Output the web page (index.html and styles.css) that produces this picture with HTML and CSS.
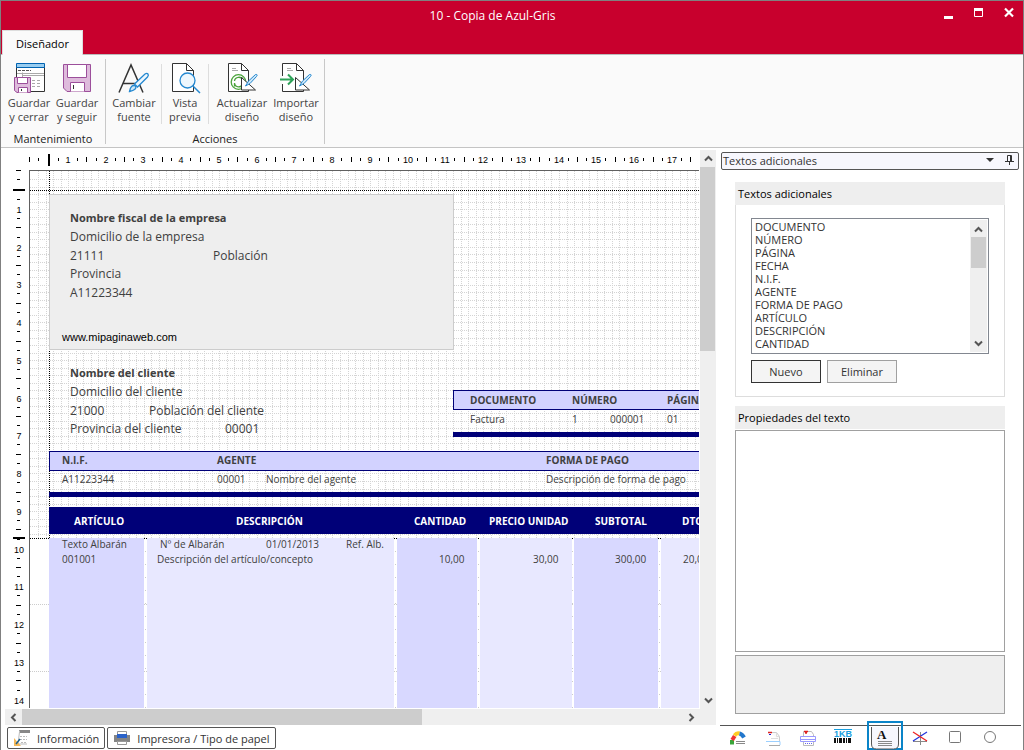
FILE: index.html
```html
<!DOCTYPE html>
<html lang="es">
<head>
<meta charset="utf-8">
<title>10 - Copia de Azul-Gris</title>
<link rel="stylesheet" href="styles.css">
</head>
<body>
<div class="window">
  <header class="titlebar">
    <h1 class="title">10 - Copia de Azul-Gris</h1>
    <div class="window-controls">
      <button type="button" aria-label="Minimizar"><svg width="10" height="12"><path d="M0 9h9v3H0z" fill="#fff"/></svg></button>
      <button type="button" aria-label="Maximizar"><svg width="10" height="12"><path d="M.5 3v6.500h8V3" fill="none" stroke="#fff"/><path d="M0 1h9v3H0z" fill="#fff"/></svg></button>
      <button type="button" aria-label="Cerrar"><svg width="10" height="12"><path d="M1 1.500l8 8M9 1.500l-8 8" stroke="#fff" stroke-width="2.200"/></svg></button>
    </div>
    <button type="button" class="ribbon-tab">Diseñador</button>
  </header>

  <nav class="ribbon">
    <section class="group">
      <div class="tools">
        <button type="button" class="tool">
          <svg width="32" height="32" viewBox="0 0 32 32" fill="none"><path d="M3.500 3v26.500h28V3" fill="#fff" stroke="#333"/><path d="M3.500 1.500h28v4h-28z" fill="#99cdf0" stroke="#0063b1"/><path d="M5 8.500h13" stroke="#555" stroke-dasharray="3 1"/><path d="M9.500 10.500V15M4 11.500h27M9 13.500h22" stroke="#aaa"/><path d="M19 18.500h10M19 21.500h10M19 24.500h10" stroke="#aaa" stroke-dasharray="3 2"/><path d="M1.500 15.500h16v15H4l-2.500-2z" fill="#debbdc" stroke="#9c4f9b"/><path d="M4.500 15.500h10v6h-10zM5.500 30.500v-5h9v5" fill="#fff" stroke="#9c4f9b"/><path d="M8.500 27v2" stroke="#333"/></svg>
          <span>Guardar<br>y cerrar</span></button>
        <button type="button" class="tool">
          <svg width="32" height="32" viewBox="0 0 32 32" fill="none"><path d="M2.500 2.500h27v27H6l-3.500-3.500z" fill="#debbdc" stroke="#9c4f9b"/><path d="M6.500 2.500h19v13h-19zM9.500 29.500v-9h14v9" fill="#fff" stroke="#9c4f9b"/><path d="M12.500 23v4" stroke="#333"/></svg>
          <span>Guardar<br>y seguir</span></button>
      </div>
      <h2>Mantenimiento</h2>
    </section>
    <section class="group">
      <div class="tools">
        <button type="button" class="tool">
          <svg width="32" height="32" viewBox="0 0 32 32" fill="none"><path d="M1 30.500L13 3l12 27.500M5.500 21.500h15" stroke="#333" stroke-width="1.500"/><path d="M11.500 29.500c1-5 3-7 6-5.500 1.500 2.500-1 4.500-6 5.500z" fill="#cce6f7" stroke="#2488d0" stroke-width="1.300"/><path d="M16.500 22L27 12c2.500-1.500 4.500.5 2.500 3L19.500 25z" fill="#eef7fd" stroke="#2488d0" stroke-width="1.300"/></svg>
          <span>Cambiar<br>fuente</span></button>
        <i class="divider"></i>
        <button type="button" class="tool tool-narrow">
          <svg width="32" height="32" viewBox="0 0 32 32" fill="none"><path d="M3.500 1.500h14l7 7v21h-21z" fill="#fff" stroke="#333"/><path d="M17.500 1.500v7h7" stroke="#333"/><circle cx="18.500" cy="18.500" r="7.500" fill="#eef7fd" stroke="#2488d0" stroke-width="1.300"/><path d="M24 24l7 7" stroke="#2488d0" stroke-width="1.500"/></svg>
          <span>Vista<br>previa</span></button>
        <i class="divider"></i>
        <button type="button" class="tool tool-wide">
          <svg width="32" height="32" viewBox="0 0 32 32" fill="none"><path d="M2.500 1.500h13l7 7v21h-20z" fill="#fff" stroke="#333"/><path d="M15.500 1.500v7h7" stroke="#333"/><path d="M6 6.500h4M6 8.500h6" stroke="#aaa"/><circle cx="12.500" cy="20" r="7.300" stroke="#4aa33a" stroke-width="1.300"/><path d="M8.500 19c.5-4.500 7-5 8-1v-2.500M8.500 24.500V21c.5 5 7 5 8 1" stroke="#4aa33a" stroke-width="1.300"/><path d="M15.500 15.500v12.500h14z" fill="#fff" stroke="#333"/><path d="M19.500 24l3-5 7-6.500c2-.5 2 1 1 2l-6.500 7z" fill="#cce6f7" stroke="#2488d0"/></svg>
          <span>Actualizar<br>diseño</span></button>
        <button type="button" class="tool">
          <svg width="32" height="32" viewBox="0 0 32 32" fill="none"><path d="M2.500 14V1.500h14l7 7v21h-21V22" fill="#fff" stroke="#333"/><path d="M16.500 1.500v7h7" stroke="#333"/><path d="M7 6.500h4M7 8.500h6" stroke="#aaa"/><path d="M0 17.500h12M8 12.500l5 5-5 5" stroke="#2fa35a" stroke-width="2"/><path d="M15.500 15.500v12.500h14z" fill="#fff" stroke="#333"/><path d="M19.500 24l3-5 7-6.500c2-.5 2 1 1 2l-6.500 7z" fill="#cce6f7" stroke="#2488d0"/></svg>
          <span>Importar<br>diseño</span></button>
      </div>
      <h2>Acciones</h2>
    </section>
  </nav>

  <main class="workspace">
    <section class="designer">
      <div class="ruler-top"><svg id="ruler-x" width="100%" height="22"></svg></div>
      <div class="ruler-left"><svg id="ruler-y" width="28" height="100%"></svg></div>
      <div class="surface" id="surface"></div>
      <div class="scroll-y">
        <button type="button" aria-label="Subir"><svg width="9" height="7"><path d="M1 5.500l3.500-3.500L8 5.500" fill="none" stroke="#555" stroke-width="2"/></svg></button>
        <i class="thumb"></i>
        <button type="button" aria-label="Bajar"><svg width="9" height="7"><path d="M1 1.500L4.500 5 8 1.500" fill="none" stroke="#555" stroke-width="2"/></svg></button>
      </div>
      <div class="scroll-x">
        <button type="button" aria-label="Izquierda"><svg width="7" height="9"><path d="M5.500 1L2 4.500 5.500 8" fill="none" stroke="#555" stroke-width="2"/></svg></button>
        <i class="thumb"></i>
        <button type="button" aria-label="Derecha"><svg width="7" height="9"><path d="M1.500 1L5 4.500 1.500 8" fill="none" stroke="#555" stroke-width="2"/></svg></button>
      </div>
      <div class="bottom-tabs">
        <button type="button"><svg width="18" height="18" fill="none"><path d="M6 1h11v3H7z" fill="#888"/><path d="M6.500 3L5 15h9" stroke="#bbb"/><path d="M7 7.500h7M7 10.500h7M8 13.500h5" stroke="#bbb" stroke-dasharray="2 1"/><path d="M1 9v8h7z" fill="#f5b95a"/><path d="M3 15l4-5" stroke="#1d5f8c" stroke-width="1.500"/></svg>Información</button>
        <button type="button"><svg width="18" height="18" fill="none"><path d="M4.500 5V2.500h9V5" fill="#fff" stroke="#999"/><path d="M1 6h16v7H1z" fill="#858585"/><path d="M4 5h10v4H4z" fill="#2a62c9"/><path d="M4.500 12.500h9v3h-9z" fill="#fff" stroke="#999"/></svg>Impresora / Tipo de papel</button>
      </div>
    </section>

    <aside class="side">
      <div class="side-title"><span>Textos adicionales</span>
        <button type="button" aria-label="Opciones"><svg width="8" height="6"><path d="M0 1h8L4 5z" fill="#333"/></svg></button>
        <button type="button" aria-label="Fijar"><svg width="9" height="10" fill="none"><path d="M2.500 6V.500h4V6M5.500 1v5M0 6.500h9M4.500 7v3" stroke="#333"/></svg></button>
      </div>
      <div class="panels">
        <section class="panel">
          <h2><label for="texts">Textos adicionales</label></h2>
          <div class="panel-body">
            <div class="list">
              <select id="texts" multiple size="10">
                <option>DOCUMENTO</option><option>NÚMERO</option><option>PÁGINA</option><option>FECHA</option><option>N.I.F.</option><option>AGENTE</option><option>FORMA DE PAGO</option><option>ARTÍCULO</option><option>DESCRIPCIÓN</option><option>CANTIDAD</option>
              </select>
              <div class="list-scroll">
                <svg width="9" height="7"><path d="M1 5.500l3.500-3.500L8 5.500" fill="none" stroke="#555" stroke-width="2"/></svg>
                <i class="thumb"></i>
                <svg width="9" height="7"><path d="M1 1.500L4.500 5 8 1.500" fill="none" stroke="#555" stroke-width="2"/></svg>
              </div>
            </div>
            <div class="actions">
              <button type="button" class="btn btn-default">Nuevo</button>
              <button type="button" class="btn">Eliminar</button>
            </div>
          </div>
        </section>
        <section class="panel panel-fill">
          <h2>Propiedades del texto</h2>
          <div class="properties"></div>
          <div class="description"></div>
        </section>
      </div>
      <div class="side-tabs">
        <button type="button" aria-label="Colores"><svg width="18" height="18" fill="none"><path d="M3 15.500V11" stroke="#3aa53a" stroke-width="4"/><path d="M3.200 11l2.500-4" stroke="#e33" stroke-width="4"/><path d="M5.500 6.500C7 4.500 9 4 10.500 4.500" stroke="#fc2" stroke-width="4"/><path d="M10.500 4.500c2 .5 3.500 2 4.500 4" stroke="#27c" stroke-width="4"/><path d="M7 12.500h9M7 14.500h9" stroke="#888"/></svg></button>
        <button type="button" aria-label="Página"><svg width="18" height="18" fill="none"><path d="M6 3.500h6.500l3 4V12" fill="#fafafa" stroke="#ccc"/><path d="M12.500 3.500v4h3M7 9.500h7" stroke="#ddd"/><path d="M4 3.500h4" stroke="#d22" stroke-width="1.500"/><path d="M5 5.500h2" stroke="#22c"/><path d="M2 12.500h14V16" stroke="#9cd0ff"/><path d="M5 16.500h11" stroke="#aaa"/></svg></button>
        <button type="button" aria-label="Bandas"><svg width="18" height="18" fill="none"><path d="M4.500 7V2.500h8l2 3V7M4.500 13v3.500h10V13" stroke="#bbb"/><path d="M5 2.500h4M6 4h2" stroke="#d22" stroke-width="1.500"/><path d="M1.500 7.500h15v5h-15z" stroke="#99f"/><path d="M2 10.500h14" stroke="#99f"/><path d="M6 14.500h8" stroke="#66e" stroke-dasharray="1 1"/></svg></button>
        <button type="button" aria-label="1KB" class="kb"><span>1KB</span><svg width="18" height="5"><path d="M0 2.500h17" stroke="#111" stroke-width="5" stroke-dasharray="2 1 1 1 3 1"/></svg></button>
        <button type="button" aria-label="Textos" class="active"><svg width="28" height="23" fill="none"><path d="M.5 0v17q0 5 5 5h17q5 0 5-5V0" fill="#f7f7fd" stroke="#555"/><path d="M7 14.500h14M7 16.500h14M7 18.500h14" stroke="#888"/><text x="6" y="12" class="letter">A</text></svg></button>
        <button type="button" aria-label="Líneas"><svg width="18" height="18" fill="none"><path d="M9.500 3v13M2 12.500h14" stroke="#888"/><path d="M16 3L2 12" stroke="#23d" stroke-width="1.300"/><path d="M2 3l14 9" stroke="#e22" stroke-width="1.300"/></svg></button>
        <button type="button" aria-label="Rectángulo"><svg width="18" height="18" fill="none"><rect x="3.500" y="2.500" width="11" height="11" rx="1" stroke="#777"/></svg></button>
        <button type="button" aria-label="Elipse"><svg width="18" height="18" fill="none"><circle cx="9" cy="8" r="5.500" stroke="#777"/></svg></button>
      </div>
    </aside>
  </main>
</div>
<script src="designer.js"></script>
</body>
</html>
```
FILE: styles.css
```css
* { box-sizing: border-box; }
html, body { height: 100%; }
body { margin: 0; font: 12px/15px "Open Sans", "Noto Sans", sans-serif; color: #333; }
h1, h2 { margin: 0; font: inherit; }
button { margin: 0; padding: 0; border: 0; background: none; font: inherit; color: inherit; }
svg { display: block; flex: none; }

.window { height: 100%; display: flex; flex-direction: column; border: 1px solid #808080; border-bottom: 0; background: #fff; }

.titlebar { height: 54px; flex: none; display: grid; grid-template: 29px 24px / 84px 1fr 84px; padding-left: 1px; background: #c8002d; border-bottom: 1px solid #bbb; }
.title { grid-column: 1 / -1; grid-row: 1; justify-self: center; align-self: center; padding-right: 40px; color: #fff; font-size: 12px; }
.window-controls { grid-column: 3; grid-row: 1; display: flex; gap: 20px; padding: 6px 0 0 5px; }
.window-controls button { align-self: start; }
.ribbon-tab { grid-row: 2; width: 81px; height: 25px; background: #fafafa; border: 1px solid #ddd; border-bottom: 0; color: #000; font-size: 11px; }

.ribbon { height: 93px; flex: none; display: flex; background: #fafafa; border-bottom: 1px solid #c4c4c4; padding: 4px 0 3px 4px; }
.group { display: flex; flex-direction: column; justify-content: space-between; border-right: 1px solid #c8c8c8; padding: 3px 4px 0 0; font-size: 11px; line-height: 14px; text-align: center; }
.group + .group { padding-left: 4px; }
.group h2 { color: #222; line-height: 11px; }
.tools { display: flex; }
.tool { width: 48px; color: #444; white-space: nowrap; }
.tool svg { margin: 0 auto 2px; }
.tool-narrow { width: 40px; }
.tool-wide { width: 60px; }
.divider { width: 1px; height: 60px; margin: 2px 3px 0; background: #ddd; }

.workspace { flex: 1; min-height: 0; display: flex; }
.designer { flex: 1; min-width: 0; display: grid; grid-template: 22px 1fr 18px 24px / 28px 1fr 16px; padding-right: 4px; }
.ruler-top { grid-column: 1 / 3; overflow: hidden; }
.ruler-left { grid-column: 1; overflow: hidden; }
.surface { grid-column: 2; grid-row: 2; position: relative; overflow: hidden; border: solid #606060; border-width: 1px 0 0 1px; margin-right: 1px; }
.scroll-y { grid-column: 3; grid-row: 1 / 4; display: flex; flex-direction: column; background: #efefef; margin: 2px 0 1px; }
.scroll-y button { height: 17px; display: grid; place-items: center; }
.scroll-y button:last-child { margin: auto 0 16px; }
.scroll-y .thumb { flex: none; height: 32%; background: #cdcdcd; margin-right: 1px; }
.scroll-x { grid-column: 1 / 3; grid-row: 3; display: flex; background: #efefef; margin: 1px 0 1px 4px; }
.scroll-x button { width: 17px; display: grid; place-items: center; }
.scroll-x button:last-child { margin-left: auto; }
.scroll-x .thumb { width: 57.500%; background: #cdcdcd; }
.bottom-tabs { grid-column: 1 / -1; display: flex; gap: 2px; padding: 1px 0 1px 6px; font-size: 11px; }
.bottom-tabs button { display: flex; align-items: center; gap: 6px; padding: 0 5px; border: 1px solid #555; border-radius: 2px; }

.tick { stroke: #000; }
.tick-origin { stroke: #000; stroke-width: 2; }
.tick-label { font: 9px "Liberation Sans", sans-serif; fill: #000; text-anchor: middle; }
.grid { position: absolute; inset: 0; width: 100%; height: 100%; }
.item { position: absolute; white-space: nowrap; line-height: 16px; color: #404040; }
.box { position: absolute; }
.company { background: #eee; border: 1px solid #ccc; }
.heading { background: #d2d2ff; border: 1px solid #000078; }
.rule, .banner { background: #000078; }
.col-dark { background: #d8d8ff; bottom: 0; }
.col-light { background: #e8e8ff; bottom: 0; }
.t-name { font-size: 11px; font-weight: 700; }
.t-body { font-size: 12px; }
.t-web { font: 11px/16px "Liberation Sans", sans-serif; color: #000; }
.t-small { font-size: 10px; }
.t-head { font-size: 10px; font-weight: 700; }
.t-banner { font-size: 10px; font-weight: 700; color: #fff; }

.side { width: 303px; flex: none; display: flex; flex-direction: column; padding: 4px 0 0; }
.side-title { height: 18px; display: flex; align-items: center; gap: 11px; margin: 0 4px 0 1px; padding: 0 4px 2px 1px; border: 1px solid #555; border-radius: 2px; background: #f7f7fd; font-size: 11px; }
.side-title span { flex: 1; }
.panels { flex: 1; min-height: 0; display: flex; flex-direction: column; gap: 9px; margin: 12px 18px 11px 15px; }
.panel { display: flex; flex-direction: column; font-size: 11px; }
.panel h2 { height: 23px; flex: none; padding: 4px 3px; background: #eee; color: #000; }
.panel-body { border: 1px solid #ddd; border-top: 0; padding: 13px 15px 13px; }
.panel-fill { flex: 1; min-height: 0; }
.list { height: 136px; display: flex; border: 1px solid #828790; }
.list select { flex: 1; height: 134px; border: 0; outline: 0; padding: 0 2px; overflow: hidden; background: #fff; color: #333; font: inherit; }
.list option { padding: 0 1px; height: 13px; min-height: 0; line-height: 13px; font-size: 11px; }
.list-scroll { width: 17px; display: flex; flex-direction: column; align-items: center; background: #efefef; margin: 1px; padding: 6px 1px 5px 0; }
.list-scroll .thumb { width: 15px; height: 31px; margin: 4px 0 auto; background: #cdcdcd; }
.actions { display: flex; gap: 6px; margin-top: 6px; }
.btn { width: 70px; height: 23px; border: 1px solid #a0a0a0; background: #f4f4f4; }
.btn-default { border-color: #333; }
.properties { flex: 1; border: 1px solid #a0a0a0; margin-top: 1px; }
.description { height: 59px; margin-top: 3px; border: 1px solid #a0a0a0; background: #efefef; }
.side-tabs { height: 25px; flex: none; display: flex; align-items: center; gap: 17px; margin-right: 2px; padding-left: 9px; border-top: 1px solid #555; }
.side-tabs .active { width: 36px; height: 29px; margin: -6px -9px 0 -2px; padding: 4px 2px 0; border: 2px solid #0a84c8; }
.kb { width: 18px; margin-bottom: 4px; color: #1aa0e0; font: 700 9px/8px "Liberation Sans", sans-serif; border-top: 1px solid #1aa0e0; }
.letter { font: 700 13px "Liberation Serif", serif; fill: #111; }
```
FILE: designer.js
```js
const NS = "http://www.w3.org/2000/svg";
const CM = 37.75;
const add = (parent, name, attrs, text) => {
  const el = document.createElementNS(NS, name);
  for (const key in attrs) el.setAttribute(key, attrs[key]);
  if (text !== undefined) el.textContent = text;
  parent.append(el);
};

const rulerX = document.getElementById("ruler-x");
const rulerY = document.getElementById("ruler-y");
const snap = (n) => Math.floor(n) + 0.5;

function drawRuler(svg, origin, count, vertical) {
  const line = (pos, from, to, cls) => add(svg, "line", vertical
    ? { x1: from, x2: to, y1: pos, y2: pos, class: cls }
    : { x1: pos, x2: pos, y1: from, y2: to, class: cls });
  for (let n = 0; n < count; n++) {
    const label = origin + CM * (n + 0.5);
    const half = label + CM / 2;
    if (vertical) add(svg, "text", { x: 18, y: Math.round(label) + 4, class: "tick-label" }, n + 1);
    else add(svg, "text", { x: Math.round(label), y: 15, class: "tick-label" }, n + 1);
    const mid = vertical ? 18 : 12;
    line(snap(label - CM / 4), mid - 2, mid + 1, "tick");
    line(snap(label + CM / 4), mid - 2, mid + 1, "tick");
    line(snap(half), mid - 3, mid + 2, "tick");
  }
}
drawRuler(rulerX, 48, 17, false);
drawRuler(rulerY, 20, 14, true);
[28.5, 37.5].forEach((x, i) => add(rulerX, "line", { x1: x, x2: x, y1: i ? 10 : 9, y2: i ? 13 : 14, class: "tick" }));
[0.5, 9.5].forEach((y, i) => add(rulerY, "line", { x1: i ? 16 : 15, x2: i ? 19 : 20, y1: y, y2: y, class: "tick" }));
add(rulerX, "line", { x1: 48, x2: 48, y1: 6, y2: 18, class: "tick-origin" });
[20, 368].forEach((y) => add(rulerY, "line", { x1: 12, x2: 24, y1: y, y2: y, class: "tick-origin" }));

const surface = document.getElementById("surface");
const grid = document.createElementNS(NS, "svg");
grid.setAttribute("class", "grid");
surface.append(grid);
const HEADER = 367;
const dots = (x1, y1, x2, y2, color, dash) =>
  add(grid, "line", { x1, y1, x2, y2, stroke: color, "stroke-dasharray": dash || "1 1" });
for (let x = 8.5; x < 1600; x += 7.55) dots(snap(x), 0, snap(x), HEADER, "#d4d4d4");
for (let y = 8.5; y < HEADER; y += 7.55) dots(0, snap(y), 1600, snap(y), "#d4d4d4");
for (let y = 433.5; y < 1600; y += 67) dots(0, y, 1600, y, "#ccc");
[115.5, 365.5, 448.5, 542.5, 629.5].forEach((x) => dots(x, 380, x, 1600, "#ccc", "1 12"));
dots(19.5, 0, 19.5, HEADER, "#000");
dots(0, 19.5, 1600, 19.5, "#000");
dots(0, HEADER + 0.5, 1600, HEADER + 0.5, "#000");

// Boxes: class, left, top, width, height (no height: down to the bottom edge)
const boxes = [
  ["company", 19, 23, 405, 156],
  ["heading", 423, 219, 900, 20],
  ["rule", 423, 261, 900, 5],
  ["heading", 19, 280, 1300, 20],
  ["rule", 19, 321, 1300, 5],
  ["banner", 19, 336, 1300, 27],
  ["col-dark", 19, 367, 95], ["col-light", 117, 367, 247], ["col-dark", 367, 367, 80],
  ["col-light", 450, 367, 92], ["col-dark", 544, 367, 84], ["col-light", 631, 367, 120],
];
for (const [cls, left, top, width, height] of boxes) {
  const el = document.createElement("div");
  el.className = "box " + cls;
  el.style.left = left + "px";
  el.style.top = top + "px";
  el.style.width = width + "px";
  if (height) el.style.height = height + "px";
  surface.append(el);
}

// Texts: class, left, vertical centre, content
const texts = [
  ["name", 40, 47, "Nombre fiscal de la empresa"], ["body", 40, 66, "Domicilio de la empresa"],
  ["body", 40, 85, "21111"], ["body", 183, 85, "Población"], ["body", 40, 103, "Provincia"],
  ["body", 40, 122, "A11223344"], ["web", 32, 166, "www.mipaginaweb.com"],
  ["name", 40, 202, "Nombre del cliente"], ["body", 40, 221, "Domicilio del cliente"],
  ["body", 40, 240, "21000"], ["body", 119, 240, "Población del cliente"],
  ["body", 40, 258, "Provincia del cliente"], ["body", 195, 258, "00001"],
  ["head", 440, 229, "DOCUMENTO"], ["head", 542, 229, "NÚMERO"], ["head", 637, 229, "PÁGINA"],
  ["small", 440, 248, "Factura"], ["small", 542, 248, "1"], ["small", 580, 248, "000001"], ["small", 637, 248, "01"],
  ["head", 32, 289, "N.I.F."], ["head", 187, 289, "AGENTE"], ["head", 516, 289, "FORMA DE PAGO"],
  ["small", 32, 308, "A11223344"], ["small", 187, 308, "00001"], ["small", 236, 308, "Nombre del agente"],
  ["small", 516, 308, "Descripción de forma de pago"],
  ["banner", 44, 350, "ARTÍCULO"], ["banner", 206, 350, "DESCRIPCIÓN"], ["banner", 384, 350, "CANTIDAD"],
  ["banner", 459, 350, "PRECIO UNIDAD"], ["banner", 565, 350, "SUBTOTAL"], ["banner", 652, 350, "DTO."],
  ["small", 32, 373, "Texto Albarán"], ["small", 130, 373, "Nº de Albarán"], ["small", 236, 373, "01/01/2013"],
  ["small", 316, 373, "Ref. Alb."], ["small", 32, 388, "001001"], ["small", 127, 388, "Descripción del artículo/concepto"],
  ["small", 409, 388, "10,00"], ["small", 503, 388, "30,00"], ["small", 585, 388, "300,00"], ["small", 653, 388, "20,00"],
];
for (const [cls, left, middle, content] of texts) {
  const el = document.createElement("span");
  el.className = "item t-" + cls;
  el.style.left = left + "px";
  el.style.top = middle - 8 + "px";
  el.textContent = content;
  surface.append(el);
}
```
